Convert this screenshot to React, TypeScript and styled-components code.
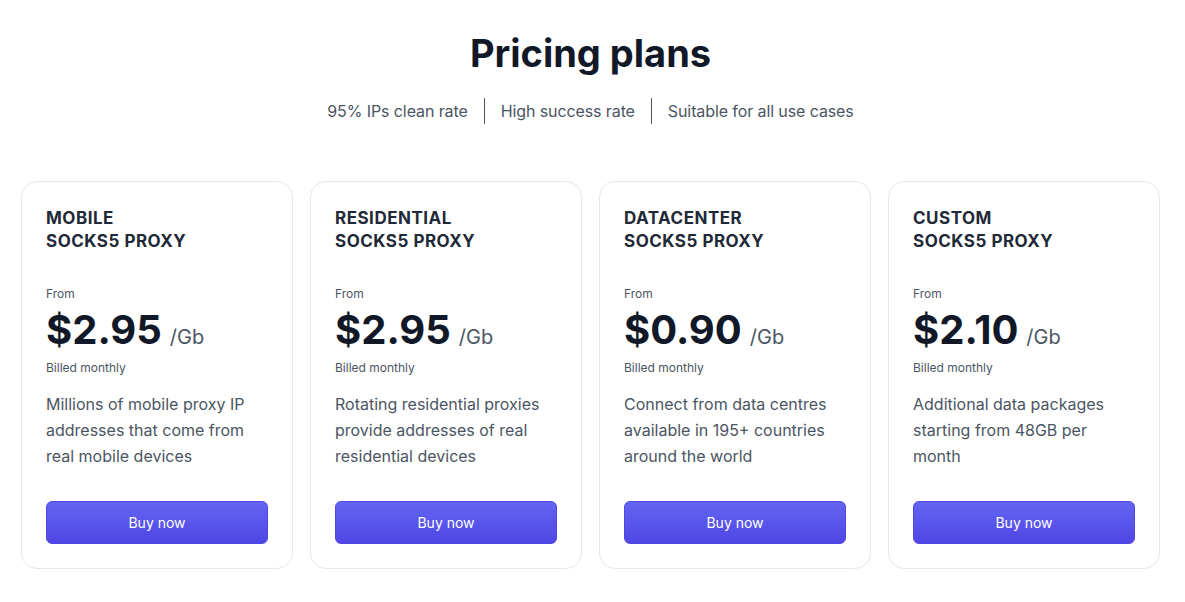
import React from 'react';
import styled, { createGlobalStyle } from 'styled-components';

const GlobalStyle = createGlobalStyle`
  * { box-sizing: border-box; }
  body {
    margin: 0;
    background: #ffffff;
    font-family: Inter, "Noto Sans", sans-serif;
    -webkit-font-smoothing: antialiased;
  }
`;

interface Plan {
  id: number;
  kind: string;
  price: string;
  description: string;
}

const plans: Plan[] = [
  { id: 1, kind: 'Mobile', price: '$2.95', description: 'Millions of mobile proxy IP addresses that come from real mobile devices' },
  { id: 2, kind: 'Residential', price: '$2.95', description: 'Rotating residential proxies provide addresses of real residential devices' },
  { id: 3, kind: 'Datacenter', price: '$0.90', description: 'Connect from data centres available in 195+ countries around the world' },
  { id: 4, kind: 'Custom', price: '$2.10', description: 'Additional data packages starting from 48GB per month' },
];

const features = ['95% IPs clean rate', 'High success rate', 'Suitable for all use cases'];

const App: React.FC = () => {
  return (
    <>
      <GlobalStyle />
      <Section>
        <Title>Pricing plans</Title>
        <Features>
          {features.map((f, i) => (
            <Feature key={f} first={i === 0}>{f}</Feature>
          ))}
        </Features>
        <Cards>
          {plans.map((plan) => (
            <Card key={plan.id}>
              <CardTitle>
                {plan.kind}
                <br />
                Socks5 proxy
              </CardTitle>
              <From>From</From>
              <PriceRow>
                <Price>{plan.price}</Price>
                <Unit>/Gb</Unit>
              </PriceRow>
              <Billed>Billed monthly</Billed>
              <Description>{plan.description}</Description>
              <BuyButton>Buy now</BuyButton>
            </Card>
          ))}
        </Cards>
      </Section>
    </>
  );
};

export default App;

const Section = styled.section`
  padding: 33px 25px 33px 21px;
  display: flex;
  flex-direction: column;
  align-items: center;
`;

const Title = styled.h1`
  margin: 0;
  font-size: 38px;
  line-height: 41px;
  font-weight: 700;
  color: #111827;
`;

const Features = styled.div`
  display: flex;
  margin-top: 24px;
`;

const Feature = styled.span<{ first: boolean }>`
  padding: 0 16px;
  font-size: 16px;
  line-height: 26px;
  letter-spacing: -0.1px;
  color: #4b5563;
  border-left: ${(p) => (p.first ? 'none' : '1px solid #4b5563')};
`;

const Cards = styled.div`
  margin-top: 57px;
  width: 100%;
  display: grid;
  grid-template-columns: repeat(4, 1fr);
  gap: 17px;
`;

const Card = styled.div`
  display: flex;
  flex-direction: column;
  padding: 24px;
  border: 1px solid #e5e7eb;
  border-radius: 16px;
  background: #fff;
`;

const CardTitle = styled.h3`
  margin: 1px 0 0;
  font-size: 17px;
  line-height: 23px;
  font-weight: 700;
  letter-spacing: 0.5px;
  text-transform: uppercase;
  color: #1f2937;
`;

const From = styled.div`
  margin-top: 33px;
  font-size: 12px;
  line-height: 16px;
  color: #4b5563;
`;

const PriceRow = styled.div`
  display: flex;
  align-items: baseline;
  margin-top: 8px;
`;

const Price = styled.span`
  font-size: 40px;
  line-height: 40px;
  font-weight: 700;
  color: #111827;
`;

const Unit = styled.span`
  margin-left: 8px;
  font-size: 20px;
  line-height: 28px;
  color: #4b5563;
`;

const Billed = styled.div`
  margin-top: 9px;
  font-size: 12px;
  line-height: 16px;
  color: #4b5563;
`;

const Description = styled.p`
  margin: 15px 0 0;
  font-size: 16px;
  line-height: 26px;
  color: #4b5563;
`;

const BuyButton = styled.button`
  margin-top: 32px;
  height: 43px;
  width: 100%;
  border: 1px solid #4f46e5;
  border-radius: 6px;
  background: linear-gradient(180deg, #6366f1 0%, #4f46e5 100%);
  color: #ffffff;
  font-family: Inter, "Noto Sans", sans-serif;
  font-size: 14px;
  font-weight: 400;
  cursor: pointer;
  &:hover {
    background: #4f46e5;
  }
`;
